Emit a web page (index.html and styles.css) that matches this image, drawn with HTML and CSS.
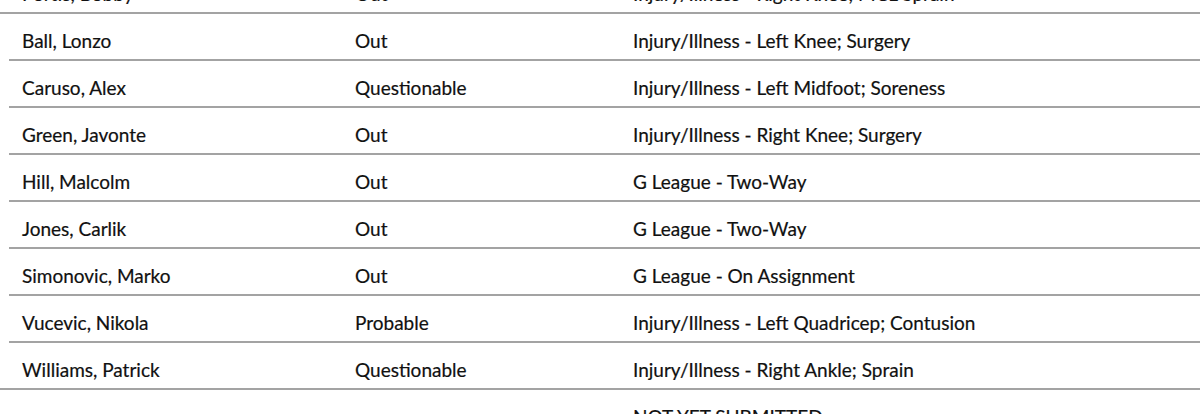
FILE: index.html
```html
<!DOCTYPE html>
<html>
<head>
<meta charset="utf-8">
<link rel="stylesheet" href="styles.css">
</head>
<body>
<div class="report">
  <div class="row group-end">
    <div class="cell">Portis, Bobby</div>
    <div class="cell">Out</div>
    <div class="cell">Injury/Illness - Right Knee; MCL Sprain</div>
  </div>
  <div class="row">
    <div class="cell">Ball, Lonzo</div>
    <div class="cell">Out</div>
    <div class="cell">Injury/Illness - Left Knee; Surgery</div>
  </div>
  <div class="row">
    <div class="cell">Caruso, Alex</div>
    <div class="cell">Questionable</div>
    <div class="cell">Injury/Illness - Left Midfoot; Soreness</div>
  </div>
  <div class="row">
    <div class="cell">Green, Javonte</div>
    <div class="cell">Out</div>
    <div class="cell">Injury/Illness - Right Knee; Surgery</div>
  </div>
  <div class="row">
    <div class="cell">Hill, Malcolm</div>
    <div class="cell">Out</div>
    <div class="cell">G League - Two-Way</div>
  </div>
  <div class="row">
    <div class="cell">Jones, Carlik</div>
    <div class="cell">Out</div>
    <div class="cell">G League - Two-Way</div>
  </div>
  <div class="row">
    <div class="cell">Simonovic, Marko</div>
    <div class="cell">Out</div>
    <div class="cell">G League - On Assignment</div>
  </div>
  <div class="row">
    <div class="cell">Vucevic, Nikola</div>
    <div class="cell">Probable</div>
    <div class="cell">Injury/Illness - Left Quadricep; Contusion</div>
  </div>
  <div class="row group-end">
    <div class="cell">Williams, Patrick</div>
    <div class="cell">Questionable</div>
    <div class="cell">Injury/Illness - Right Ankle; Sprain</div>
  </div>
  <div class="row last">
    <div class="cell"></div>
    <div class="cell"></div>
    <div class="cell">NOT YET SUBMITTED</div>
  </div>
</div>
</body>
</html>
```
FILE: styles.css
```css
html, body {
  margin: 0;
  padding: 0;
  background: #ffffff;
}

.report {
  margin-top: -33px;
  font-family: Lato, "Liberation Sans", sans-serif;
  font-size: 19px;
  color: #111111;
}

.row {
  display: grid;
  grid-template-columns: 333px 278px 1fr;
  height: 45px;
  margin-left: 9px;
  padding-left: 13px;
  border-bottom: 2px solid #a3a3a3;
  align-items: start;
}

.row.group-end {
  margin-left: 0;
  padding-left: 22px;
}

.row.last {
  border-bottom: none;
}

.cell {
  padding-top: 17px;
  line-height: 20px;
  white-space: nowrap;
  -webkit-text-stroke: 0.2px #111111;
}
```
